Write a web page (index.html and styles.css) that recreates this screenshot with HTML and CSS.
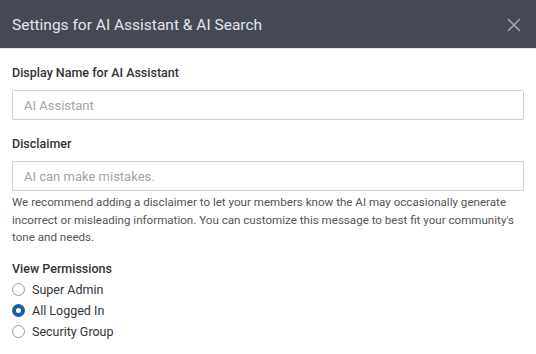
FILE: index.html
```html
<!DOCTYPE html>
<html>
<head>
<meta charset="utf-8">
<link rel="stylesheet" href="styles.css">
</head>
<body>
<div class="modal">
  <div class="header">
    <div class="title">Settings for AI Assistant &amp; AI Search</div>
    <svg class="close" width="14" height="14" viewBox="0 0 14 14"><path d="M1 1L13 13M13 1L1 13" stroke="#a9acb3" stroke-width="1.4" fill="none"/></svg>
  </div>
  <div class="content">
    <div class="field">
      <label class="label">Display Name for AI Assistant</label>
      <input class="input" type="text" placeholder="AI Assistant">
    </div>
    <div class="field field-help">
      <label class="label">Disclaimer</label>
      <input class="input" type="text" placeholder="AI can make mistakes.">
      <p class="help">We recommend adding a disclaimer to let your members know the AI may occasionally generate incorrect or misleading information. You can customize this message to best fit your community's tone and needs.</p>
    </div>
    <div class="perms">
      <div class="label">View Permissions</div>
      <div class="radio"><span class="dot"></span><span>Super Admin</span></div>
      <div class="radio"><span class="dot on"></span><span>All Logged In</span></div>
      <div class="radio"><span class="dot"></span><span>Security Group</span></div>
    </div>
  </div>
</div>
</body>
</html>
```
FILE: styles.css
```css
* { box-sizing: border-box; }
html, body { margin: 0; background: #fff; }
body { font-family: Roboto, "Liberation Sans", sans-serif; color: #333; }
.header {
  height: 49px;
  background: #454955;
  display: flex;
  align-items: center;
  justify-content: space-between;
  padding: 2px 15px 0 12px;
  border-bottom: 1px solid #e6e6e6;
}
.title { color: #e4e5e8; font-size: 15.5px; }
.content { padding: 15px 12px 0; }
.field { display: flex; flex-direction: column; margin-bottom: 15px; }
.field-help { margin-bottom: 13px; }
.label { font-size: 12.5px; font-weight: 500; color: #333; line-height: 17px; margin-bottom: 9px; }
.input {
  height: 30px;
  border: 1px solid #d0d0d0;
  border-radius: 2px;
  padding: 0 11px;
  font-family: inherit;
  font-size: 13px;
  color: #333;
  outline: none;
}
.input::placeholder { color: #a4a4a4; }
.help { margin: 3px 0 0; font-size: 11.6px; line-height: 17.5px; color: #555; }
.perms .label { margin-bottom: 2px; }
.radio { display: flex; align-items: center; gap: 7px; height: 21px; font-size: 12.5px; color: #333; }
.dot { width: 13px; height: 13px; border-radius: 50%; border: 1px solid #9a9a9a; background: #fff; }
.dot.on { border: 4px solid #1a5da6; }
```
